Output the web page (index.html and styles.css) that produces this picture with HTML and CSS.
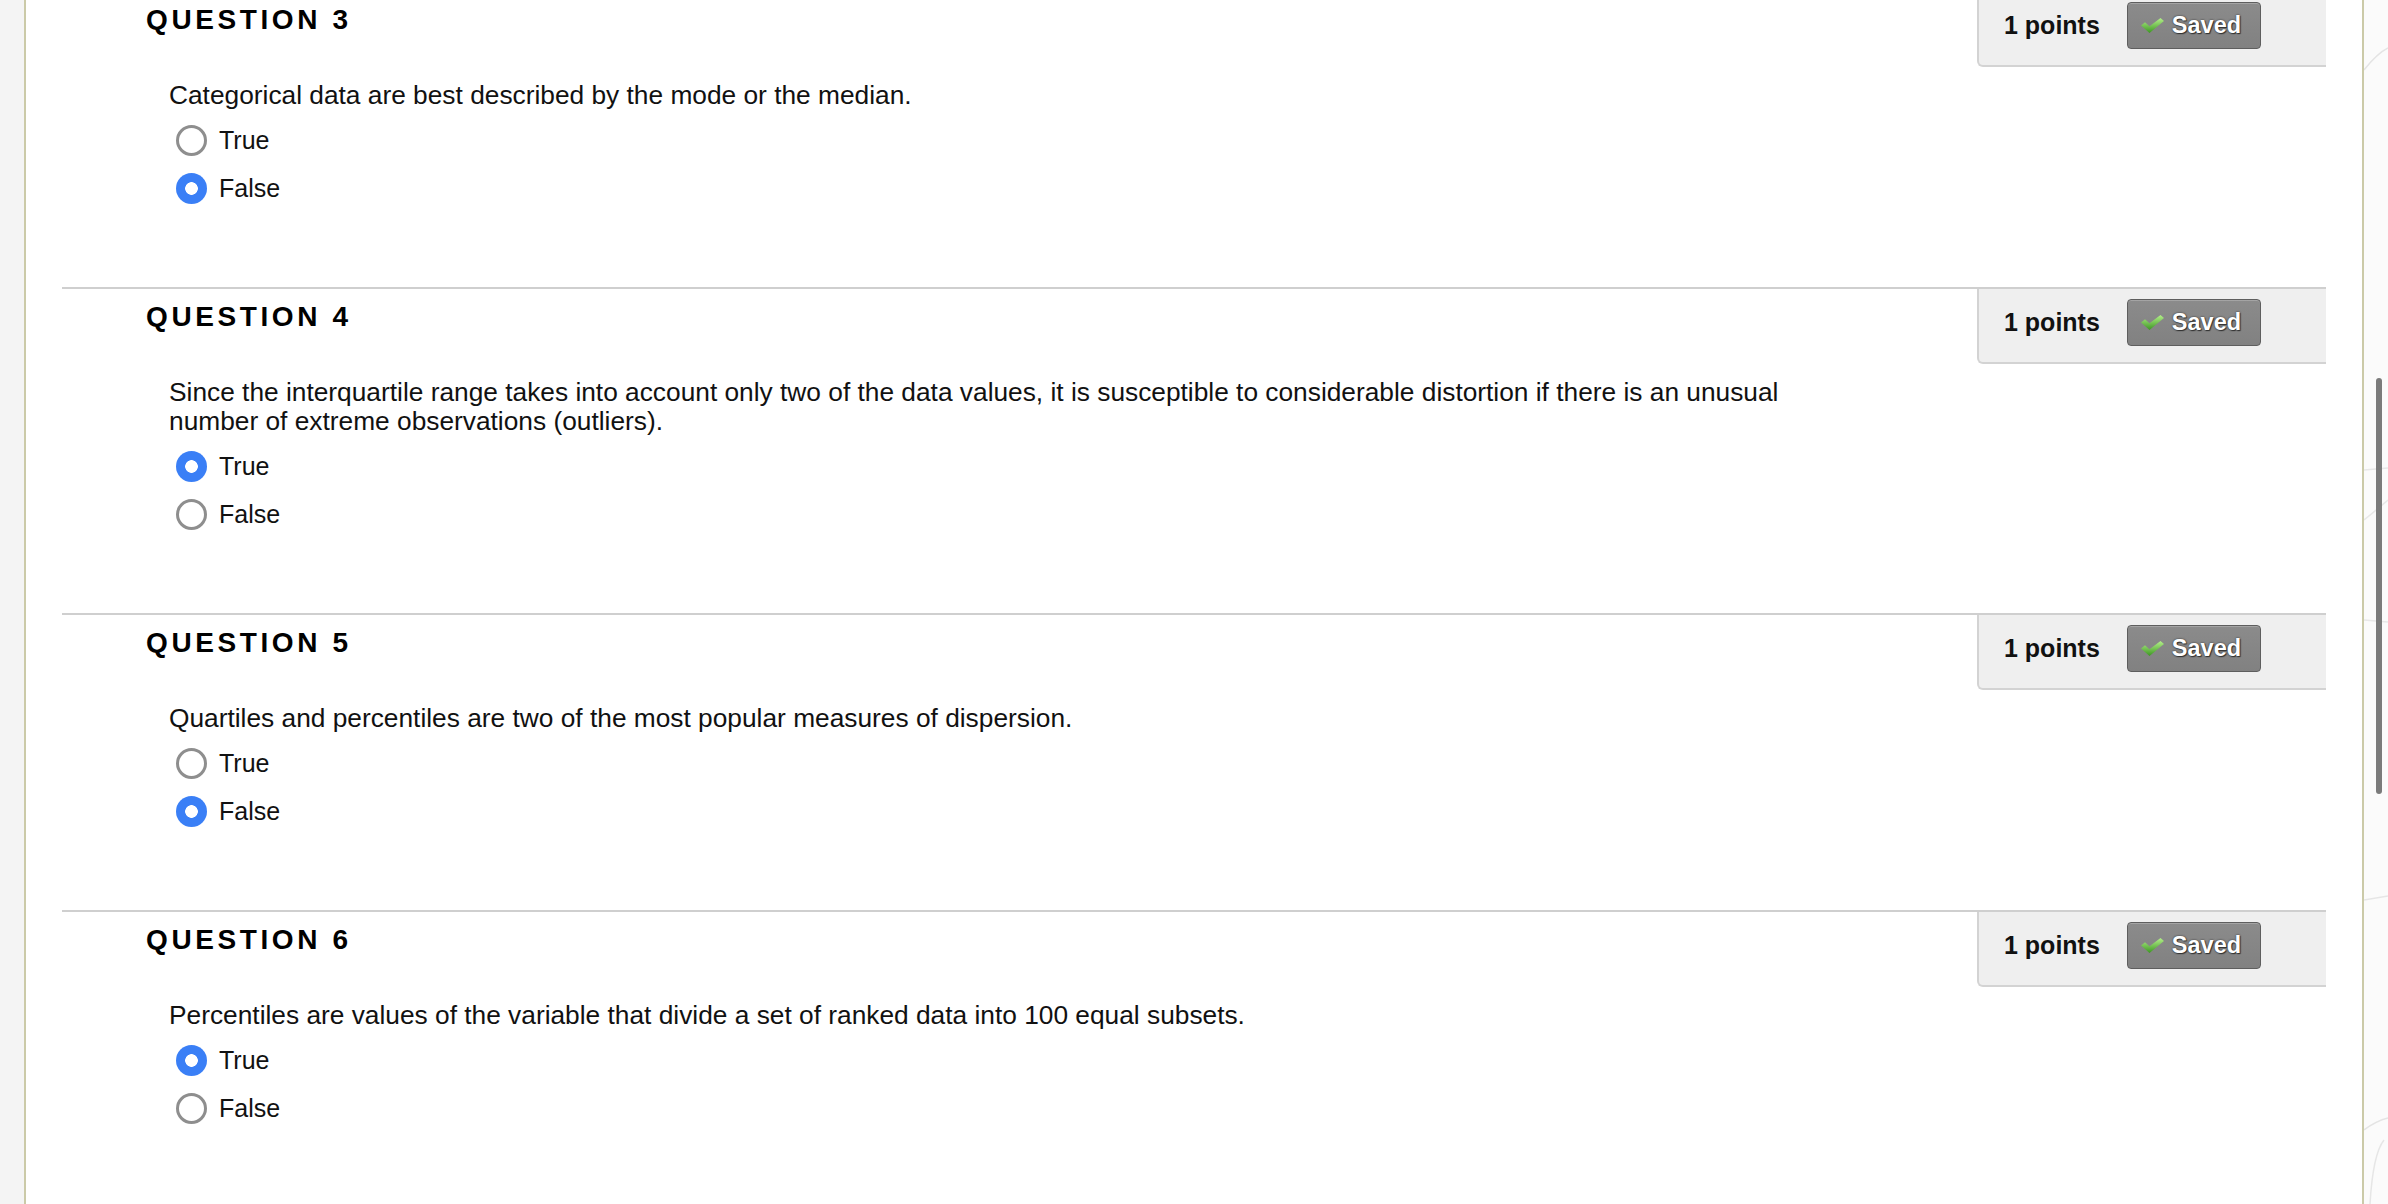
FILE: index.html
```html
<!DOCTYPE html>
<html lang="en">
<head>
<meta charset="utf-8">
<title>Quiz</title>
<link rel="stylesheet" href="styles.css">
</head>
<body>
<div class="page">
  <div class="gutter-left"></div>
  <main class="panel">
    <div class="questions">

      <section class="question">
        <div class="q-head">
          <h3 class="q-title">QUESTION 3</h3>
          <div class="points">
            <span class="points-label">1 points</span>
            <span class="saved"><svg class="check" width="23" height="15" viewBox="0 0 23 15"><defs><linearGradient id="g3" x1="0" y1="0" x2="0" y2="1"><stop offset="0" stop-color="#b4f08a"/><stop offset="1" stop-color="#3c9622"/></linearGradient></defs><polygon points="0,7.5 4,4.3 8.5,8.3 19.5,0 23,3 8.5,15" fill="url(#g3)"/></svg>Saved</span>
          </div>
        </div>
        <p class="q-text">Categorical data are best described by the mode or the median.</p>
        <ul class="options">
          <li class="option"><input type="radio" name="q3"><span>True</span></li>
          <li class="option"><input type="radio" name="q3" checked><span>False</span></li>
        </ul>
      </section>

      <section class="question">
        <div class="q-head">
          <h3 class="q-title">QUESTION 4</h3>
          <div class="points">
            <span class="points-label">1 points</span>
            <span class="saved"><svg class="check" width="23" height="15" viewBox="0 0 23 15"><defs><linearGradient id="g4" x1="0" y1="0" x2="0" y2="1"><stop offset="0" stop-color="#b4f08a"/><stop offset="1" stop-color="#3c9622"/></linearGradient></defs><polygon points="0,7.5 4,4.3 8.5,8.3 19.5,0 23,3 8.5,15" fill="url(#g4)"/></svg>Saved</span>
          </div>
        </div>
        <p class="q-text">Since the interquartile range takes into account only two of the data values, it is susceptible to considerable distortion if there is an unusual number of extreme observations (outliers).</p>
        <ul class="options">
          <li class="option"><input type="radio" name="q4" checked><span>True</span></li>
          <li class="option"><input type="radio" name="q4"><span>False</span></li>
        </ul>
      </section>

      <section class="question">
        <div class="q-head">
          <h3 class="q-title">QUESTION 5</h3>
          <div class="points">
            <span class="points-label">1 points</span>
            <span class="saved"><svg class="check" width="23" height="15" viewBox="0 0 23 15"><defs><linearGradient id="g5" x1="0" y1="0" x2="0" y2="1"><stop offset="0" stop-color="#b4f08a"/><stop offset="1" stop-color="#3c9622"/></linearGradient></defs><polygon points="0,7.5 4,4.3 8.5,8.3 19.5,0 23,3 8.5,15" fill="url(#g5)"/></svg>Saved</span>
          </div>
        </div>
        <p class="q-text">Quartiles and percentiles are two of the most popular measures of dispersion.</p>
        <ul class="options">
          <li class="option"><input type="radio" name="q5"><span>True</span></li>
          <li class="option"><input type="radio" name="q5" checked><span>False</span></li>
        </ul>
      </section>

      <section class="question">
        <div class="q-head">
          <h3 class="q-title">QUESTION 6</h3>
          <div class="points">
            <span class="points-label">1 points</span>
            <span class="saved"><svg class="check" width="23" height="15" viewBox="0 0 23 15"><defs><linearGradient id="g6" x1="0" y1="0" x2="0" y2="1"><stop offset="0" stop-color="#b4f08a"/><stop offset="1" stop-color="#3c9622"/></linearGradient></defs><polygon points="0,7.5 4,4.3 8.5,8.3 19.5,0 23,3 8.5,15" fill="url(#g6)"/></svg>Saved</span>
          </div>
        </div>
        <p class="q-text">Percentiles are values of the variable that divide a set of ranked data into 100 equal subsets.</p>
        <ul class="options">
          <li class="option"><input type="radio" name="q6" checked><span>True</span></li>
          <li class="option"><input type="radio" name="q6"><span>False</span></li>
        </ul>
      </section>

    </div>
  </main>
  <aside class="gutter-right">
    <svg class="bg-lines" width="24" height="1204" viewBox="0 0 24 1204" preserveAspectRatio="none">
      <path d="M0 70 C8 60 16 52 24 48" stroke="#e4e4e4" stroke-width="1.5" fill="none"/>
      <path d="M0 470 L24 468" stroke="#e8e8e8" stroke-width="1.5" fill="none"/>
      <path d="M0 520 C10 512 18 505 24 500" stroke="#e8e8e8" stroke-width="1.5" fill="none"/>
      <path d="M0 620 L24 622" stroke="#e8e8e8" stroke-width="1.5" fill="none"/>
      <path d="M0 900 L24 896" stroke="#e6e6e6" stroke-width="1.5" fill="none"/>
      <path d="M0 1130 C8 1124 16 1120 24 1118" stroke="#e4e4e4" stroke-width="1.5" fill="none"/>
      <path d="M6 1204 C8 1170 12 1150 20 1140" stroke="#e6e6e6" stroke-width="1.5" fill="none"/>
    </svg>
    <div class="scroll-thumb"></div>
  </aside>
</div>
</body>
</html>
```
FILE: styles.css
```css
* { box-sizing: border-box; }

html, body {
  margin: 0;
  height: 100%;
  overflow: hidden;
}

body {
  font-family: "Liberation Sans", Arial, Helvetica, sans-serif;
  color: #111;
  background: #f5f5f5;
}

.page {
  display: flex;
  height: 1204px;
}

.gutter-left {
  flex: none;
  width: 24px;
  background: #f4f4f4;
}

.panel {
  flex: none;
  width: 2340px;
  background: #fff;
  border-left: 2px solid #cbcaa8;
  border-right: 2px solid #cbcaa8;
  overflow: hidden;
}

.gutter-right {
  flex: 1;
  position: relative;
  background: #fbfbfb;
}

.bg-lines {
  position: absolute;
  left: 0;
  top: 0;
}

.scroll-thumb {
  position: absolute;
  left: 12px;
  top: 378px;
  width: 6px;
  height: 416px;
  border-radius: 3px;
  background: #7b7b7b;
}

.questions {
  margin-top: -10px;
  padding: 0 36px;
}

.question {
  border-top: 2px solid #cfcfcf;
  padding-bottom: 75px;
}

.q-head {
  display: flex;
  align-items: flex-start;
}

.q-title {
  margin: 0;
  padding: 11px 0 0 84px;
  font-size: 28px;
  line-height: 34px;
  font-weight: bold;
  letter-spacing: 3.6px;
  color: #000;
}

.points {
  margin-left: auto;
  width: 349px;
  height: 75px;
  display: flex;
  align-items: center;
  gap: 27px;
  padding: 10px 0 16px 25px;
  background: #efefef;
  border-left: 2px solid #d3d3d3;
  border-bottom: 2px solid #d3d3d3;
  border-bottom-left-radius: 6px;
}

.points-label {
  font-size: 25px;
  font-weight: bold;
  color: #111;
}

.saved {
  width: 134px;
  height: 47px;
  display: flex;
  align-items: center;
  gap: 8px;
  padding-left: 13px;
  background: linear-gradient(#8b8b8b, #818181);
  border: 1px solid #5e5e5e;
  border-radius: 4px;
  box-shadow: inset 0 1px 0 rgba(255, 255, 255, 0.22);
  color: #fff;
  font-size: 23.5px;
  font-weight: bold;
  text-shadow: 0 0 2px #2a2a2a, 1px 1px 1px #333;
}

.check {
  flex: none;
}

.q-text {
  margin: 14px 0 0;
  padding-left: 107px;
  width: 1767px;
  font-size: 26.3px;
  line-height: 29px;
  color: #111;
}

.options {
  list-style: none;
  margin: 6px 0 0;
  padding: 0 0 0 114px;
}

.option {
  height: 48px;
  display: flex;
  align-items: center;
  gap: 12px;
  font-size: 25px;
  color: #111;
}

.option input {
  appearance: none;
  -webkit-appearance: none;
  margin: 0;
  flex: none;
  width: 31px;
  height: 31px;
  border: 3px solid #8e8e8e;
  border-radius: 50%;
  background: #fff;
}

.option input:checked {
  border: none;
  background: radial-gradient(circle, #fff 0 6px, #3a7ff6 6.6px);
}
```
